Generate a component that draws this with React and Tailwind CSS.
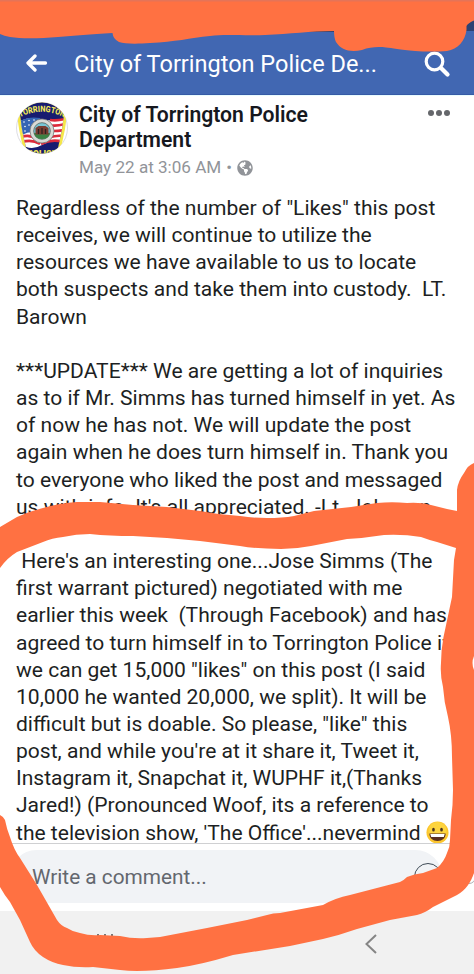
import React from 'react';
import { FaGlobeAmericas } from 'react-icons/fa';

const POST_LINES = [
  'Regardless of the number of "Likes" this post',
  'receives, we will continue to utilize the',
  'resources we have available to us to locate',
  'both suspects and take them into custody.  LT.',
  'Barown',
  '',
  '***UPDATE*** We are getting a lot of inquiries',
  'as to if Mr. Simms has turned himself in yet. As',
  'of now he has not. We will update the post',
  'again when he does turn himself in. Thank you',
  'to everyone who liked the post and messaged',
  "us with info. It's all appreciated. -Lt. Johnson",
  '',
  " Here's an interesting one...Jose Simms (The",
  'first warrant pictured) negotiated with me',
  'earlier this week  (Through Facebook) and has',
  'agreed to turn himself in to Torrington Police if',
  'we can get 15,000 "likes" on this post (I said',
  '10,000 he wanted 20,000, we split). It will be',
  'difficult but is doable. So please, "like" this',
  "post, and while you're at it share it, Tweet it,",
  'Instagram it, Snapchat it, WUPHF it,(Thanks',
  'Jared!) (Pronounced Woof, its a reference to',
  "the television show, 'The Office'...nevermind ",
];

function Grin() {
  return (
    <svg className="inline-block h-[23px] w-[23px] align-[-4px]" viewBox="0 0 24 24">
      <circle cx="12" cy="12" r="11.5" fill="#fcc62f" />
      <circle cx="12" cy="10.5" r="9.5" fill="#fdd43f" />
      <ellipse cx="7.8" cy="9" rx="1.4" ry="2" fill="#4b3320" />
      <ellipse cx="16.2" cy="9" rx="1.4" ry="2" fill="#4b3320" />
      <path d="M3.5 13h17c0 4.8-3.6 7.8-8.500 7.800S3.500 17.800 3.500 13z" fill="#5a2f20" />
      <path d="M4.500 13.600h15l-.9 3H5.400z" fill="#fff" />
    </svg>
  );
}

function Badge() {
  return (
    <svg className="h-[52px] w-[52px] shrink-0" viewBox="0 0 52 52">
      <defs>
        <clipPath id="round"><circle cx="26" cy="26" r="25.500" /></clipPath>
        <clipPath id="shield"><path d="M4 12Q14 0 26 0Q38 0 48 12L46 27L42 46L38 52H14L10 46L6 27Z" /></clipPath>
        <path id="arc" d="M3.500 15.500Q26 4 48.500 15.500" />
      </defs>
      <circle cx="26" cy="26" r="25.500" fill="#fff" stroke="#dddde2" strokeWidth="1" />
      <g clipPath="url(#round)">
        <path d="M1 12Q12 -3 26 -3Q40 -3 51 12L49 27L45 46L42 52H10L7 46L3 27Z" fill="#f4e64a" />
        <g clipPath="url(#shield)">
          <rect width="52" height="52" fill="#171c70" />
          <path d="M4 19Q14 14 25 17T49 17V41Q38 36 26 43T4 41Z" fill="#fff" />
          <g fill="none" stroke="#dc2b3c" strokeWidth="2.600">
            <path d="M34 18Q41 19 49 17" />
            <path d="M36 23.500Q42 24 49 22" />
            <path d="M37 29Q42 29 49 28" />
            <path d="M33 35.500Q40 33 48 34" />
            <path d="M25 42Q35 37 46 39.500" />
            <path d="M5 35Q14 32 20 37" />
            <path d="M6 40Q16 37 24 42" />
          </g>
          <path d="M4 19Q13 14 24 16V31Q14 28 6 33Z" fill="#3565b4" />
          <g fill="#fff">
            <circle cx="8" cy="20" r=".8" /><circle cx="13" cy="18.500" r=".8" /><circle cx="18" cy="18" r=".8" />
            <circle cx="9" cy="24.500" r=".8" /><circle cx="13" cy="23" r=".8" /><circle cx="9" cy="29" r=".8" />
          </g>
        </g>
        <circle cx="26" cy="29" r="12" fill="#d9dad6" stroke="#777" strokeWidth=".8" />
        <circle cx="26" cy="29" r="8.300" fill="#78c5d4" stroke="#55655f" strokeWidth=".8" />
        <path d="M18 31h16q-1 6-8 6T18 31z" fill="#3c8245" />
        <path d="M19.500 26l3-2h7l3 2v6.500h-13z" fill="#793c31" />
        <path d="M22.500 27v5M26 26v6M29.500 27v5" stroke="#2d2422" strokeWidth="1.300" />
        <text fill="#f6ec55" fontFamily="Roboto" fontSize="8.500" fontWeight="800">
          <textPath href="#arc" startOffset="50%" textAnchor="middle" textLength="46" lengthAdjust="spacingAndGlyphs">TORRINGTON</textPath>
        </text>
        <text x="26" y="54.500" fill="#f6ec55" fontFamily="Roboto" fontSize="8.500" fontWeight="900" textAnchor="middle">POLICE</text>
      </g>
    </svg>
  );
}

// hand-drawn marker over the whole screen
function Marker() {
  return (
    <svg className="pointer-events-none absolute inset-0" width="474" height="974" viewBox="0 0 474 974" fill="#ff7142">
      <path d="M466 24L474 20V31H466Z" fill="#2c4274" />
      <path d="M300 30.500H335V32L300 32Z" fill="#2c4274" />
      <path d="M0 0H474V20.500Q468 23 466.500 26V30C465 41 458 49 447 51C438 51.800 425 51.800 415 51C400 50 392 48 386 47.500C378 46.500 370 47 362 50C350 52.500 341 50 336 42Q334 38 334 31C310 31 290 34 265 35C245 36 225 34 210 36C190 38 175 42 150 43C137 44 125 44 119 42Q113 39 112.500 33C90 34 75 36 58 37C40 38.500 22 39 10 37Q4 36 0 34Z" />
      <path d="M0 0H474V1.500H0Z" fill="#e57458" />
      <path
        fillRule="evenodd"
        d="M0 527L17 517Q30 511 43 508Q60 503 77 502L100 502L133 505L167 507L200 511Q220 515 240 516Q253 518 267 518Q282 518 294 516L314 511L351 507L377 503Q392 501.500 407 503Q420 502 431 505L447 509L457 511V490Q458 481 464 473Q468 465 474 463V873C471 882 466 890 457 895L433 907Q425 913 417 915L390 920L357 929Q340 935 323 939L290 946L233 955Q200 965 177 968Q155 971 137 971Q128 971 120 970L93 967Q77 968 63 965Q52 963 43 957Q34 951 30 942L20 920L10 902Q5 896 0 887V815Q4 817 5 820Q7 830 10 837Q14 850 20 858L37 885L57 920Q61 926 67 928Q73 932 80 933Q90 936 100 935L120 936Q133 939 147 938L160 937L207 928L247 920L267 915Q273 913 280 913L323 905Q335 898 350 895L400 882Q403 881 407 877Q414 874 423 873L437 868Q444 862 447 853Q450 847 450 840L451 820Q453 805 453 790L452 757Q452 735 448 717Q444 702 443 687Q440 675 441 663Q441 650 443.500 637L452 597L454 560L456 548L437 542Q429 540 421 537Q403 534 384 535Q365 538 347 539L311 546Q296 549 281 549Q257 549 240 546L200 541L167 538L133 536Q110 536 90 534Q76 534 63 537Q52 538 43 542L17 552Q7 558 0 568Z"
      />
      <path d="M474 656Q471 663 474 670Z" fill="#fff" />
    </svg>
  );
}

export default function App() {
  return (
    <div className="relative flex h-[974px] w-[474px] flex-col overflow-hidden bg-white font-[Roboto,sans-serif]">
      <header className="flex h-[95px] shrink-0 items-end border-b border-[#365aa5] bg-[#4167b2] pl-[26px] text-white">
        <svg className="mb-[21px] h-[20px] w-[22px]" viewBox="0 0 22 20" fill="none" stroke="currentColor" strokeWidth="3.300" strokeLinecap="round" strokeLinejoin="round">
          <path d="M19.500 10H3M9 3L2 10L9 17" />
        </svg>
        <h1 className="mb-[14px] ml-[26px] w-[350px] whitespace-pre text-[23.5px] leading-[32px]">City of Torrington Police De...</h1>
        <svg className="mb-[16px] h-[27px] w-[27px]" viewBox="0 0 27 27" fill="none" stroke="currentColor" strokeLinecap="round">
          <circle cx="10.500" cy="10.500" r="8.300" strokeWidth="3.200" />
          <path d="M17.500 17.500L23.500 23.500" strokeWidth="4.300" />
        </svg>
      </header>

      <main className="h-[748px] shrink-0 overflow-hidden border-t border-[#e9fbff] pl-4">
        <div className="flex h-[98px] pt-[6px]">
          <Badge />
          <div className="ml-[11px] w-[349px]">
            <h2 className="whitespace-pre text-[21.15px] font-semibold leading-[25px] text-[#16181e]">
              City of Torrington Police{'\n'}Department
            </h2>
            <div className="mt-[3px] flex items-center text-[17.1px] leading-[25px] text-[#919499]">
              <span>May 22 at 3:06 AM</span>
              <span className="mx-[5px]">•</span>
              <FaGlobeAmericas className="h-4 w-4" />
            </div>
          </div>
          <div className="mt-[8px] flex h-[6px] gap-[2.500px]">
            <i className="h-[5.500px] w-[5.500px] rounded-full bg-[#65676b]" />
            <i className="h-[5.500px] w-[5.500px] rounded-full bg-[#65676b]" />
            <i className="h-[5.500px] w-[5.500px] rounded-full bg-[#65676b]" />
          </div>
        </div>
        <div className="text-[21.05px] leading-[27.170px] text-[#1d1f23]">
          {POST_LINES.map((line, i) => (
            <p key={i} className="h-[27.170px] whitespace-pre">
              {line}
              {i === POST_LINES.length - 1 && <Grin />}
            </p>
          ))}
        </div>
      </main>

      <section className="flex h-[68px] shrink-0 border-t border-[#cfd0d2] bg-white pl-[10px] pt-[6px]">
        <div className="flex h-[53px] w-[437px] items-center rounded-full bg-[#f1f3f6] pl-[22px] text-[20.8px] text-[#63676e]">
          <span className="w-[382px] pt-[2px]">Write a comment...</span>
          <i className="h-[28px] w-[28px] shrink-0 rounded-full border border-[#3e4a55]" />
        </div>
        <i className="ml-[20px] mt-[20px] h-[14px] w-[14px] shrink-0 rounded-full border border-[#a9adb3]" />
      </section>

      <nav className="flex h-[63px] shrink-0 justify-between bg-[#f1f1f1] pl-[97px] pr-[97px]">
        <span className="mt-[23px] flex h-[20px] gap-[5px]">
          <i className="w-[2px] bg-[#777]" />
          <i className="w-[2px] bg-[#777]" />
          <i className="w-[2px] bg-[#777]" />
        </span>
        <svg className="mt-[23px] h-[20px] w-[12px]" viewBox="0 0 12 20" fill="none" stroke="#858585" strokeWidth="2">
          <path d="M11 1L1.500 10L11 19" />
        </svg>
      </nav>
      <Marker />
    </div>
  );
}
